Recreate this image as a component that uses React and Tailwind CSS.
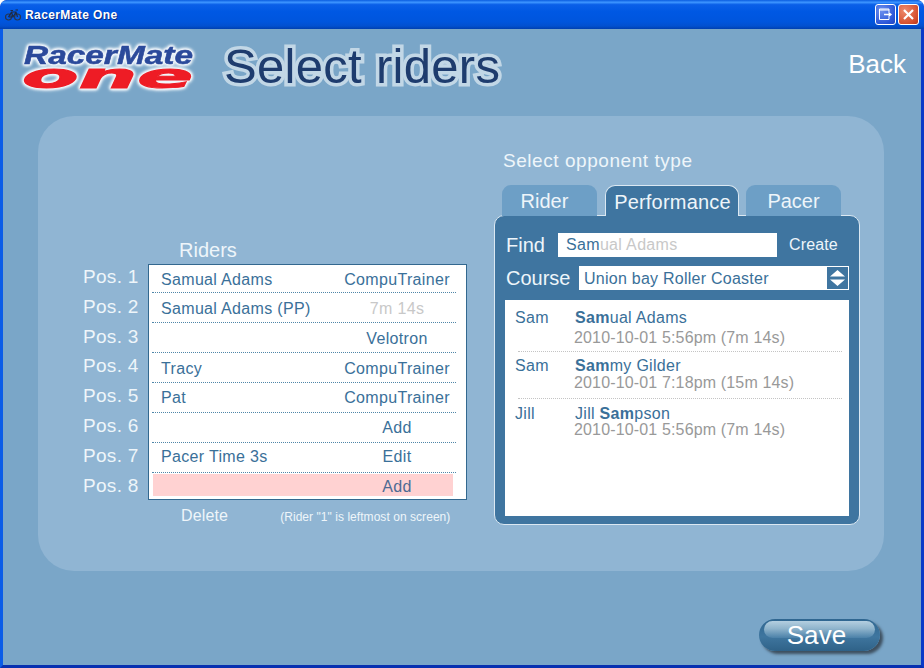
const rows = [
  ["Samual Adams", "CompuTrainer", false, "h-[28px] pt-[2px]"],
  ["Samual Adams (PP)", "7m 14s", true, "h-[30px] pt-[2px]"],
  ["", "Velotron", false, "h-[30px] pt-[2px]"],
  ["Tracy", "CompuTrainer", false, "h-[30px] pt-[2px]"],
  ["Pat", "CompuTrainer", false, "h-[30px] pt-[1px]"],
  ["", "Add", false, "h-[30px] pt-[1px]"],
  ["Pacer Time 3s", "Edit", false, "h-[30px] pb-[1px]"],
];

function Logo() {
  const glow = "drop-shadow(0 0 1px #f2f7fb) drop-shadow(0 0 1px #f2f7fb) drop-shadow(0 0 1px #f2f7fb) drop-shadow(0 0 1.5px #e4eef5)";
  const a = { fontFamily: '"Liberation Sans", Arial, sans-serif', fontWeight: 700, fontStyle: "italic", filter: glow };
  const b = { fontFamily: '"DejaVu Sans", sans-serif', fontWeight: 700, fontStyle: "italic", filter: glow };
  return (
    <svg width="182" height="56" viewBox="0 0 182 56" className="shrink-0 overflow-visible">
      <text x="4" y="49" fontSize="34" textLength="171" lengthAdjust="spacingAndGlyphs" fill="#ee1c25" stroke="#ee1c25" strokeWidth="1" style={b}>one</text>
      <text x="6" y="25" fontSize="25" textLength="169" lengthAdjust="spacingAndGlyphs" fill="#2b4a9b" stroke="#2b4a9b" strokeWidth="0.5" style={a}>RacerMate</text>
    </svg>
  );
}

function Bike() {
  return (
    <svg width="16" height="12" viewBox="0 0 16 12" fill="none" stroke="#27364f" strokeWidth="1.2">
      <circle cx="3.5" cy="8" r="3" />
      <circle cx="12.5" cy="8" r="3" />
      <path d="M3.5 8 L6.5 3 H11 L12.5 8 M6.5 3 L8 8 H3.5 M8 8 L11 3 M5.5 1.5 H8 M10.5 1 H13" stroke="#1e2b44" />
    </svg>
  );
}

export default function App() {
  return (
    <div className="w-[924px] h-[668px] flex flex-col overflow-hidden bg-[#0a40c8] font-['Liberation_Sans',Arial,sans-serif] rounded-t-[7px]">
      {/* title bar */}
      <div className="h-[29px] shrink-0 flex items-center pl-[5px] pr-[5px] rounded-t-[7px] bg-[linear-gradient(180deg,#0a5ce0_0%,#3d95ff_8%,#0a5fe8_16%,#0058e3_40%,#0055dd_75%,#0250cf_90%,#0040b0_100%)]">
        <Bike />
        <span className="ml-[4px] mt-[1px] text-white text-[12px] font-bold tracking-[0.4px] [text-shadow:1px_1px_0_#0a2a80]">RacerMate One</span>
        <div className="ml-auto flex items-center gap-[2px]">
          <div className="w-[21px] h-[21px] rounded-[3px] border border-white bg-[radial-gradient(circle_at_30%_30%,#6d90ee,#2b56d8_70%,#1f45c0)] flex items-center justify-center">
            <svg width="15" height="13" viewBox="0 0 15 13" fill="none" stroke="#fff">
              <path d="M1.5 2 H11 M1.5 1 H11 M1.5 1 V11.5 H11 V9 M11 1 V4" />
              <path d="M6 6.5 H13 M10.5 4.5 L13 6.5 L10.5 8.5" strokeWidth="1.3" />
            </svg>
          </div>
          <div className="w-[21px] h-[21px] rounded-[3px] border border-white bg-[radial-gradient(circle_at_30%_30%,#ee8a6c,#d5502f_70%,#b8351a)] flex items-center justify-center">
            <svg width="13" height="13" viewBox="0 0 13 13" stroke="#fff" strokeWidth="2.2"><path d="M2 2 L11 11 M11 2 L2 11" /></svg>
          </div>
        </div>
      </div>

      {/* client */}
      <div className="flex-1 border-l-[3px] border-l-[#0b5ce8] border-r-[3px] border-r-[#0a3ac8] border-b-[3px] border-b-[#0830b0] bg-[#7aa6c8] flex flex-col">
        {/* header */}
        <div className="h-[87px] shrink-0 flex">
          <div className="ml-[15px] mt-[10px]"><Logo /></div>
          <div className="ml-[24px] mt-[7px] h-[60px] leading-[60px] text-[49px] text-[#1e3c6e] tracking-[0.3px] [-webkit-text-stroke:7px_#c2d7e6] [paint-order:stroke_fill] whitespace-nowrap">Select riders</div>
          <div className="ml-auto mr-[15px] mt-[16px] h-[38px] leading-[38px] text-[26px] text-white">Back</div>
        </div>

        {/* panel */}
        <div className="ml-[35px] w-[846px] h-[455px] shrink-0 rounded-[36px] bg-[#90b5d3] flex items-start">
          {/* left */}
          <div className="ml-[46px] mt-[124px] w-[383px] shrink-0">
            <div className="ml-[95px] h-[24px] leading-[21px] text-[20px] text-[#eef5fa]">Riders</div>
            <div className="flex">
              <div className="w-[65px] shrink-0 -mt-[2px] -ml-[1px]">
                {["1", "2", "3", "4", "5", "6", "7", "8"].map((n) => (
                  <div key={n} className="h-[29.8px] leading-[29.8px] text-[19px] tracking-[0.3px] text-[#eef5fa] whitespace-nowrap">Pos. {n}</div>
                ))}
              </div>
              <div className="w-[319px] h-[236px] border border-[#33688f] bg-white pl-[3px] text-[16px] tracking-[0.33px] text-[#3a7099]">
                {rows.map(([name, device, grey, cls], i) => (
                  <div key={i} className={`${cls} w-[304px] border-b border-dotted border-[#4f86a8] flex items-center`}>
                    <span className="pl-[9px] w-[185px] whitespace-nowrap">{name}</span>
                    <span className={`w-[119px] pl-[1px] text-center whitespace-nowrap ${grey ? "text-[#c8c8c8]" : ""}`}>{device}</span>
                  </div>
                ))}
                <div className="h-[22px] mt-[1px] ml-[1px] w-[300px] pt-[3px] bg-[#ffd2d2] flex items-center text-[#4e6a93]">
                  <span className="w-[184px] shrink-0" />
                  <span className="w-[119px] shrink-0 pl-[1px] text-center">Add</span>
                </div>
              </div>
            </div>
            <div className="flex mt-[6px] items-center h-[20px] text-[#eef5fa]">
              <span className="ml-[97px] text-[16px] tracking-[0.15px]">Delete</span>
              <span className="ml-[52px] mt-[2px] text-[12px] tracking-[0.05px] whitespace-nowrap">(Rider "1" is leftmost on screen)</span>
            </div>
          </div>

          {/* right */}
          <div className="ml-[27px] mt-[34px] w-[366px] shrink-0">
            <div className="ml-[9px] h-[22px] leading-[22px] text-[19px] tracking-[0.55px] text-[#eef5fa]">Select opponent type</div>
            <div className="flex items-end h-[44px] mt-[-1px] relative z-10 text-[20px] text-[#eef5fa] translate-y-[1px]">
              <div className="ml-[8px] w-[95px] h-[31px] pr-[10px] rounded-t-[9px] bg-[#6d9fc6] text-center leading-[33px]">Rider</div>
              <div className="ml-[8px] w-[134px] h-[31px] pl-[1px] rounded-t-[10px] border border-b-0 border-[#dbe8f2] bg-[#3f75a0] text-center leading-[33px] tracking-[0.2px]">Performance</div>
              <div className="ml-[7px] w-[95px] h-[31px] rounded-t-[9px] bg-[#6d9fc6] text-center leading-[33px]">Pacer</div>
            </div>
            <div className="h-[310px] rounded-[10px] border border-[#dbe8f2] bg-[#3f75a0] px-[10px] pt-[17px]">
              <div className="flex items-center h-[24px] text-[#eef5fa]">
                <span className="w-[53px] pl-[1px] text-[20px]">Find</span>
                <div className="w-[219px] h-[24px] bg-white pl-[8px] leading-[24px] text-[16px] tracking-[0.33px] text-[#c8c8c8] whitespace-nowrap">
                  <span className="text-[#3a7099]">Sam</span>ual Adams
                </div>
                <span className="ml-[12px] text-[16px] tracking-[0.15px]">Create</span>
              </div>
              <div className="flex items-center h-[24px] mt-[9px] text-[#eef5fa]">
                <span className="w-[74px] pl-[1px] text-[20px]">Course</span>
                <div className="w-[270px] h-[24px] bg-white pl-[5px] flex items-center text-[16px] tracking-[0.25px] text-[#3a7099] whitespace-nowrap">
                  <span className="mt-[2px]">Union bay Roller Coaster</span>
                  <div className="ml-auto mr-[1px] w-[21px] h-[22px] bg-[#3f75a0] flex items-center justify-center">
                    <svg width="17" height="18" viewBox="0 0 17 18" fill="#fff"><path d="M8.5 1 L16 7.5 H1 Z M1 10.5 H16 L8.5 17 Z" /></svg>
                  </div>
                </div>
              </div>
              <div className="mt-[10px] h-[216px] w-[344px] bg-white text-[16px] tracking-[0.3px] pl-[13px]">
                <Result h="h-[52px]" pt="pt-[9px]" gap="mt-[3px]" q="Sam" name={<><b>Sam</b>ual Adams</>} date="2010-10-01 5:56pm (7m 14s)" line />
                <Result h="h-[47px]" pt="pt-[5px]" gap="mt-0" q="Sam" name={<><b>Sam</b>my Gilder</>} date="2010-10-01 7:18pm (15m 14s)" line />
                <Result h="h-[47px]" pt="pt-[6px]" gap="-mt-[1px]" q="Jill" name={<>Jill <b>Sam</b>pson</>} date="2010-10-01 5:56pm (7m 14s)" />
              </div>
            </div>
          </div>
        </div>

        {/* footer */}
        <div className="flex justify-end pr-[41px] pt-[48px]">
          <div className="relative w-[121px] h-[32px] rounded-full bg-[linear-gradient(180deg,#2f6690_0%,#3f769f_55%,#2f6288_100%)] shadow-[3px_3px_3px_#3d4f5f] flex items-center justify-center pr-[6px]">
            <div className="absolute left-[5px] right-[5px] top-[2px] h-[17px] rounded-full bg-[linear-gradient(180deg,#b4cfe0_0%,#8fb4cc_45%,#4a80a8_100%)]" />
            <span className="relative text-[26px] tracking-[0.1px] text-white">Save</span>
          </div>
        </div>
      </div>
    </div>
  );
}

function Result({ h, pt, gap, q, name, date, line }) {
  return (
    <div className={`${h} ${pt} w-[324px] ${line ? "border-b border-dotted border-[#c4c4c4]" : ""} flex`}>
      <span className="w-[60px] -ml-[3px] leading-[18px] text-[#3a7099]">{q}</span>
      <div>
        <div className="leading-[18px] text-[#3a7099] whitespace-nowrap">{name}</div>
        <div className={`${gap} -ml-[1px] leading-[16px] tracking-[0.15px] text-[#999999] whitespace-nowrap`}>{date}</div>
      </div>
    </div>
  );
}
